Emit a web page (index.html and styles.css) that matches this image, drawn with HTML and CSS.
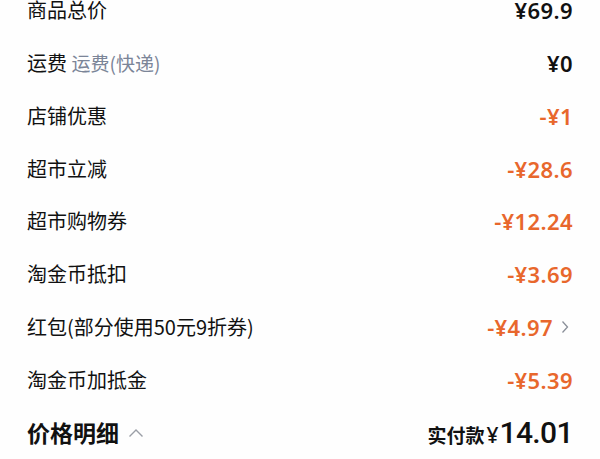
FILE: index.html
```html
<!DOCTYPE html>
<html lang="zh">
<head>
<meta charset="utf-8">
<link rel="stylesheet" href="styles.css">
</head>
<body>
<div class="list">
  <div class="row"><span class="label">商品总价</span><span class="val">¥69.9</span></div>
  <div class="row"><span class="label">运费 <span class="sub">运费(快递)</span></span><span class="val">¥0</span></div>
  <div class="row"><span class="label">店铺优惠</span><span class="val neg">-¥1</span></div>
  <div class="row"><span class="label">超市立减</span><span class="val neg">-¥28.6</span></div>
  <div class="row"><span class="label">超市购物券</span><span class="val neg">-¥12.24</span></div>
  <div class="row"><span class="label">淘金币抵扣</span><span class="val neg">-¥3.69</span></div>
  <div class="row"><span class="label">红包(部分使用50元9折券)</span><span class="val neg with-arrow">-¥4.97<svg class="arrow" width="8" height="14" viewBox="0 0 8 14"><path d="M1.5 1.5 L6.5 7 L1.5 12.5" fill="none" stroke="#8a8f99" stroke-width="1.3"/></svg></span></div>
  <div class="row"><span class="label">淘金币加抵金</span><span class="val neg">-¥5.39</span></div>
  <div class="row total">
    <span class="title">价格明细<svg class="chev" width="16" height="10" viewBox="0 0 16 10"><path d="M1.5 8.5 L8 2 L14.5 8.5" fill="none" stroke="#9a9ea6" stroke-width="1.4"/></svg></span>
    <span class="pay"><span class="pay-label">实付款</span><span class="pay-yen">¥</span><span class="pay-num">14.01</span></span>
  </div>
</div>
</body>
</html>
```
FILE: styles.css
```css
html, body {
  margin: 0;
  padding: 0;
  background: #fefefe;
}
body {
  width: 600px;
  height: 459px;
  overflow: hidden;
  font-family: "Noto Sans CJK SC", "Noto Sans", sans-serif;
  color: #111;
}
.list {
  margin-top: -16px;
  padding: 0 27px 0 27px;
}
.row {
  height: 52.75px;
  display: flex;
  align-items: center;
  justify-content: space-between;
}
.label {
  font-size: 20px;
  line-height: 1;
  color: #111;
}
.sub {
  font-size: 19px;
  color: #7b8598;
}
.val {
  font-family: "Noto Sans", "Noto Sans CJK SC", sans-serif;
  font-size: 22px;
  font-weight: 600;
  letter-spacing: 0.4px;
  line-height: 1;
  color: #111;
  display: flex;
  align-items: center;
}
.neg {
  color: #e8672c;
}
.with-arrow .arrow {
  margin-left: 8px;
  margin-right: 4px;
}
.title {
  font-size: 23px;
  font-weight: 700;
  display: flex;
  align-items: center;
}
.chev {
  margin-left: 9px;
  margin-top: 2px;
}
.pay {
  display: flex;
  align-items: baseline;
}
.pay-label {
  font-size: 19px;
  font-weight: 700;
}
.pay-yen {
  font-family: "Noto Sans", sans-serif;
  font-size: 21px;
  font-weight: 500;
  margin-left: 2px;
  margin-right: 1px;
}
.pay-num {
  font-family: Roboto, "Noto Sans", sans-serif;
  font-size: 30px;
  font-weight: 500;
  letter-spacing: -0.6px;
}
```
